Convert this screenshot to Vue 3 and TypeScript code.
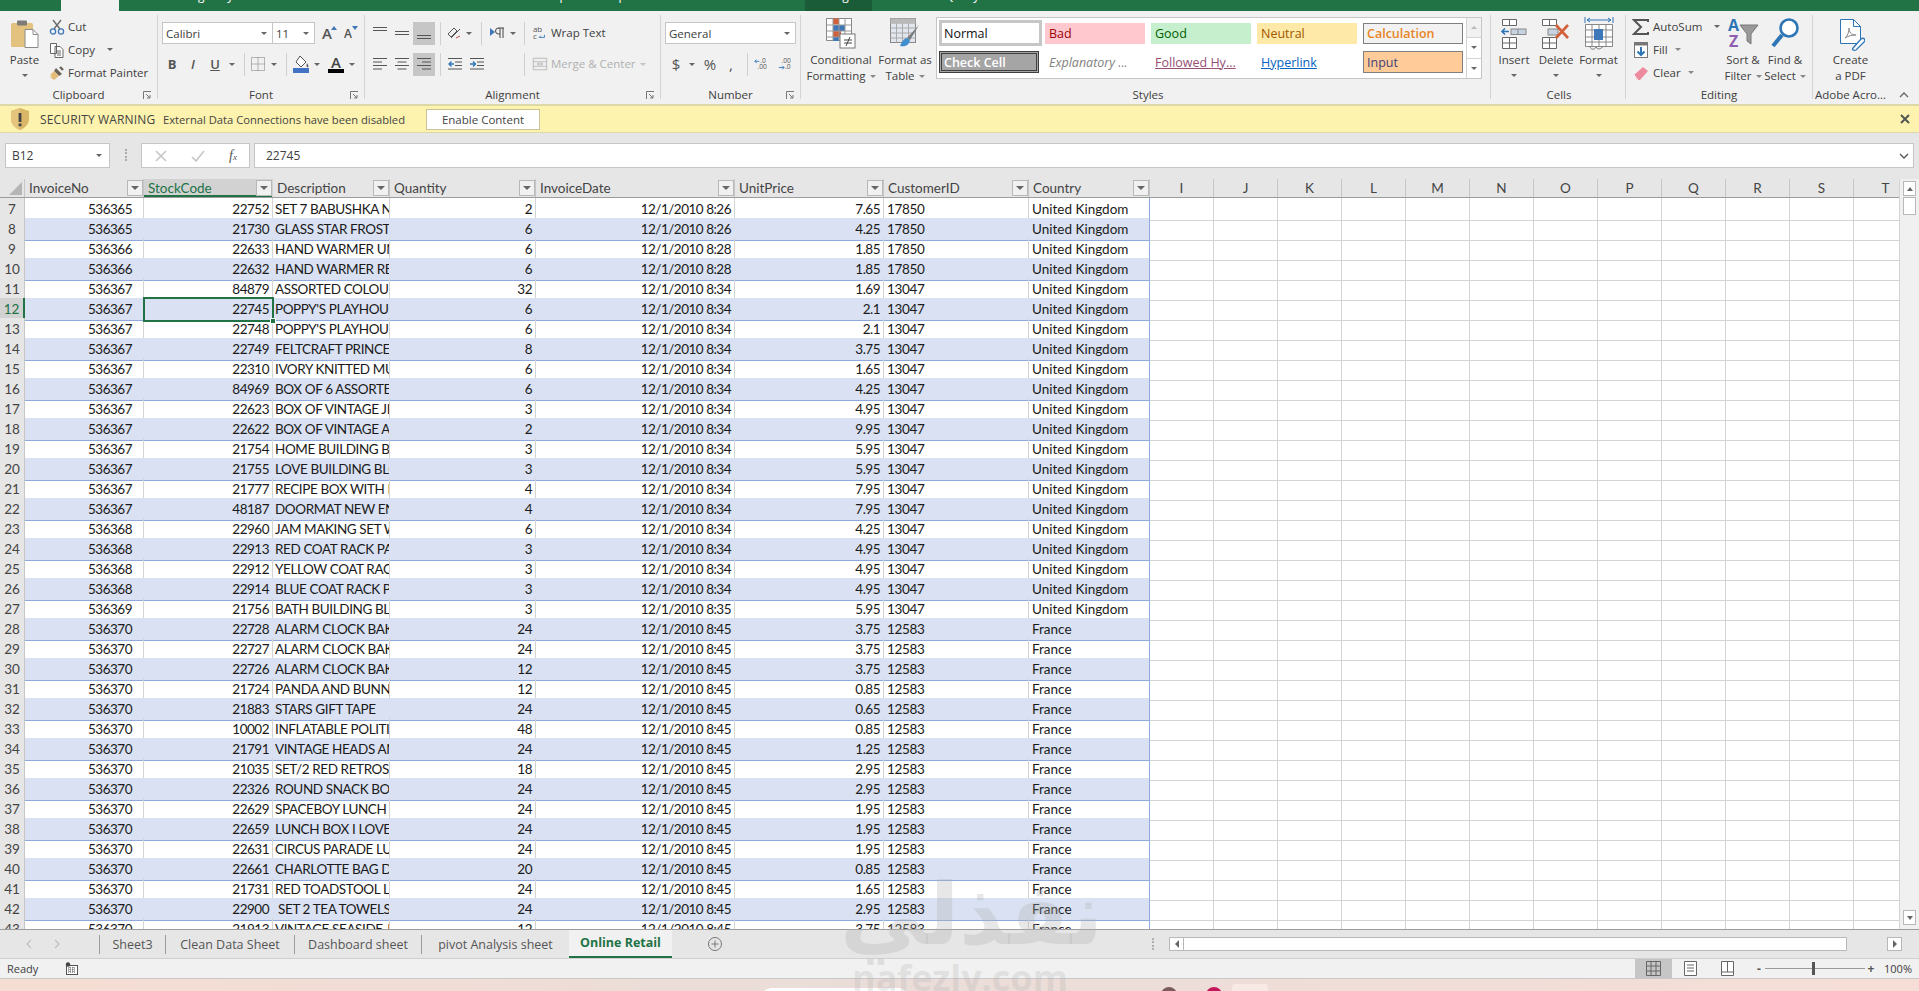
<template>
  <div class="excel">
    <!-- title strip, cut off by the capture -->
    <div class="titlebar">
      <div class="home-tab"></div>
      <div v-for="t in topTabs" :key="t.label" class="top-tab" :class="{ on: t.on }" :style="{ width: t.w + 'px', paddingLeft: t.pad + 'px' }"><span>{{ t.label }}</span></div>
    </div>

    <div class="ribbon">
      <!-- Clipboard -->
      <section class="group g-clip">
        <div class="body row">
          <div class="paste">
            <svg width="30" height="30" viewBox="0 0 30 30">
              <rect x="1" y="4" width="22" height="24" rx="1.5" fill="#e3c27f" />
              <rect x="7" y="1.5" width="10" height="5" rx="1" fill="#7d7a78" />
              <path d="M15 10.5h8l5 5v13H15z" fill="#fff" stroke="#8a8a8a" />
              <path d="M23 10.5v5h5" fill="none" stroke="#8a8a8a" />
            </svg>
            <span class="txt">Paste</span>
            <i class="caret"></i>
          </div>
          <div class="stack">
            <div class="small">
              <svg class="s-ico" viewBox="0 0 16 16"><path d="M4 1l7 9M12 1L5 10" stroke="#6b6b6b" stroke-width="1.4" fill="none" /><circle cx="4" cy="12.5" r="2.6" fill="none" stroke="#3f78b8" stroke-width="1.3" /><circle cx="12" cy="12.5" r="2.6" fill="none" stroke="#3f78b8" stroke-width="1.3" /></svg>
              <span>Cut</span>
            </div>
            <div class="small">
              <svg class="s-ico" viewBox="0 0 16 16"><path d="M1.5 1.5h6v10h-6zM6 4.5h5l3 3v8H6z" fill="#fff" stroke="#666" /><path d="M8 9h4M8 11h4M8 13h4" stroke="#666" /></svg>
              <span>Copy</span>
              <i class="caret copy-caret"></i>
            </div>
            <div class="small">
              <svg class="s-ico" viewBox="0 0 16 16"><path d="M7 3l6 6-3 2-5-5z" fill="#6a6258" /><path d="M5 6l5 5-5 4-4-3 2-1-2-1z" fill="#e2bc79" /><path d="M11 2l3 3" stroke="#6a6258" stroke-width="2.4" /></svg>
              <span>Format Painter</span>
            </div>
          </div>
        </div>
        <div class="label">Clipboard</div>
        <svg class="launch" viewBox="0 0 9 9"><path d="M.5 8V.5H8M3 3l4 4M7 4v3H4" fill="none" stroke="#777" /></svg>
      </section>

      <!-- Font -->
      <section class="group g-font">
        <div class="body">
          <div class="tools">
            <div class="select w-font"><span>Calibri</span><i class="caret"></i></div>
            <div class="select w-size"><span>11</span><i class="caret"></i></div>
            <div class="tb w-a1">A<svg class="mini-arrow" viewBox="0 0 6 4"><path d="M3 0l3 4H0z" fill="#3f78b8" /></svg></div>
            <div class="tb w-a2">A<svg class="mini-arrow" viewBox="0 0 6 4"><path d="M0 0h6L3 4z" fill="#3f78b8" /></svg></div>
          </div>
          <div class="tools second">
            <div class="tb w20 fb">B</div>
            <div class="tb w22 fi">I</div>
            <div class="tb w22 fu">U</div>
            <div class="tb w12"><i class="caret"></i></div>
            <i class="sep ml6"></i>
            <div class="tb w-bd"><svg class="ico" viewBox="0 0 16 16"><path d="M1.5 1.5h13v13h-13zM8 1.5v13M1.5 8h13" fill="none" stroke="#777" stroke-dasharray="1 1" /></svg></div>
            <div class="tb w12"><i class="caret"></i></div>
            <i class="sep ml6"></i>
            <div class="tb w-fill">
              <svg width="18" height="18" viewBox="0 0 18 18"><path d="M8 1l6 6-5 5-5-5z" fill="#fff" stroke="#555" /><path d="M15 8c1 2 2 3 1 4s-2 0-1-4z" fill="#555" /><rect x="1" y="13" width="16" height="5" fill="#4472c4" /></svg>
            </div>
            <div class="tb w12"><i class="caret"></i></div>
            <div class="tb w-color"><span class="color-a">A</span></div>
            <div class="tb w12"><i class="caret"></i></div>
          </div>
        </div>
        <div class="label">Font</div>
        <svg class="launch" viewBox="0 0 9 9"><path d="M.5 8V.5H8M3 3l4 4M7 4v3H4" fill="none" stroke="#777" /></svg>
      </section>

      <!-- Alignment -->
      <section class="group g-align">
        <div class="body">
          <div class="tools">
            <div class="tb w22"><svg class="ico" viewBox="0 0 16 16"><path d="M1 2.5h14M1 5.5h14" stroke="#555" /></svg></div>
            <div class="tb w22"><svg class="ico" viewBox="0 0 16 16"><path d="M1 6.5h14M1 9.5h14" stroke="#555" /></svg></div>
            <div class="tb w22 hit"><svg class="ico" viewBox="0 0 16 16"><path d="M1 10.5h14M1 13.5h14" stroke="#555" /></svg></div>
            <i class="sep ml5"></i>
            <div class="tb w-or"><svg class="ico" viewBox="0 0 16 16"><path d="M2 9l6-6 3 3-6 6zM5 13l9-9" fill="none" stroke="#555" /><path d="M10 13l4-2" stroke="#c0504d" /></svg></div>
            <div class="tb w10"><i class="caret"></i></div>
            <i class="sep ml7"></i>
            <div class="tb w-rtl"><svg class="ico" viewBox="0 0 16 16"><path d="M1 3l5 4-5 4z" fill="#3f78b8" /><path d="M9 3h6M11 3v10M14 3v10M9.500 3a3 3 0 0 0 0 6h1.500" fill="none" stroke="#444" /></svg></div>
            <div class="tb w10 ml2"><i class="caret"></i></div>
            <i class="sep ml6"></i>
            <div class="tb w-wrap"><svg class="ico" viewBox="0 0 18 18"><text x="1" y="8" font-size="9" fill="#555" font-family="Open Sans, sans-serif">ab</text><text x="1" y="16" font-size="9" fill="#555" font-family="Open Sans, sans-serif">c</text><path d="M8 14h6v-3M8 14l2-2" fill="none" stroke="#3f78b8" /></svg></div>
            <span class="txt tool-label">Wrap Text</span>
          </div>
          <div class="tools second">
            <div class="tb w22"><svg class="ico" viewBox="0 0 16 16"><path d="M1 2.500h14M1 6h9M1 9.500h14M1 13h9" stroke="#555" /></svg></div>
            <div class="tb w22"><svg class="ico" viewBox="0 0 16 16"><path d="M1 2.500h14M3.500 6h9M1 9.500h14M3.500 13h9" stroke="#555" /></svg></div>
            <div class="tb w22 hit"><svg class="ico" viewBox="0 0 16 16"><path d="M1 2.500h14M6 6h9M1 9.500h14M6 13h9" stroke="#555" /></svg></div>
            <i class="sep ml5"></i>
            <div class="tb w22 ml3"><svg class="ico" viewBox="0 0 16 16"><path d="M1 2.500h14M8 6h7M8 9.500h7M1 13h14" stroke="#555" /><path d="M7 8H2M4.500 5.500L2 8l2.500 2.500" fill="none" stroke="#2e75b6" stroke-width="1.300" /></svg></div>
            <div class="tb w22"><svg class="ico" viewBox="0 0 16 16"><path d="M1 2.500h14M8 6h7M8 9.500h7M1 13h14" stroke="#555" /><path d="M1 8h5M4 5.500L6.500 8 4 10.500" fill="none" stroke="#2e75b6" stroke-width="1.300" /></svg></div>
            <i class="sep ml-merge"></i>
            <div class="tb w-wrap"><svg class="ico" viewBox="0 0 18 18"><path d="M1.500 2.500h15v13h-15zM1.500 6.500h15M1.500 11.500h15M6 9h6M6 9l2-1.500M6 9l2 1.500M12 9l-2-1.500M12 9l-2 1.500" fill="none" stroke="#b4b4b4" /></svg></div>
            <span class="txt tool-label off">Merge &amp; Center</span>
            <i class="caret off-caret"></i>
          </div>
        </div>
        <div class="label">Alignment</div>
        <svg class="launch" viewBox="0 0 9 9"><path d="M.5 8V.5H8M3 3l4 4M7 4v3H4" fill="none" stroke="#777" /></svg>
      </section>

      <!-- Number -->
      <section class="group g-num">
        <div class="body">
          <div class="tools">
            <div class="select w-general"><span>General</span><i class="caret"></i></div>
          </div>
          <div class="tools second">
            <div class="tb w22 big-sym">$</div>
            <div class="tb w10"><i class="caret"></i></div>
            <div class="tb w24 ml1 big-sym">%</div>
            <div class="tb w18 big-sym">,</div>
            <i class="sep ml7"></i>
            <div class="tb w22 ml3"><svg class="ico" viewBox="0 0 18 16"><text x="7" y="7" font-size="7.500" fill="#555" font-family="Open Sans, sans-serif">.0</text><text x="4" y="14" font-size="7.500" fill="#555" font-family="Open Sans, sans-serif">.00</text><path d="M6 5H1M3 3L1 5l2 2" fill="none" stroke="#2e75b6" /></svg></div>
            <div class="tb w22 ml1"><svg class="ico" viewBox="0 0 18 16"><text x="5" y="7" font-size="7.500" fill="#555" font-family="Open Sans, sans-serif">.00</text><text x="9" y="14" font-size="7.500" fill="#555" font-family="Open Sans, sans-serif">.0</text><path d="M2 12h6M6 10l2 2-2 2" fill="none" stroke="#2e75b6" /></svg></div>
          </div>
        </div>
        <div class="label">Number</div>
        <svg class="launch" viewBox="0 0 9 9"><path d="M.5 8V.5H8M3 3l4 4M7 4v3H4" fill="none" stroke="#777" /></svg>
      </section>

      <!-- Styles -->
      <section class="group g-styles">
        <div class="body row">
          <div class="big w-cond">
            <div class="big-ico">
              <svg width="30" height="33" viewBox="0 0 30 33">
                <path d="M.5 1.500h25v22h-25z" fill="#fff" stroke="#888" />
                <rect x="7" y="1.500" width="6" height="6" fill="#d2603a" />
                <rect x="7" y="8" width="12" height="6" fill="#3f78b8" />
                <rect x="7" y="14" width="8" height="6" fill="#d2603a" />
                <rect x="7" y="20" width="6" height="4" fill="#3f78b8" />
                <path d="M7 1.500v22M13 1.500v22M19 1.500v22M.5 8h25M.5 14h25M.5 20h25" stroke="#999" fill="none" />
                <rect x="14" y="17" width="15" height="14" fill="#fff" stroke="#777" />
                <path d="M18 23h8M18 26h8M24 20l-4 9" stroke="#444" />
              </svg>
            </div>
            <span class="txt">Conditional</span>
            <span class="txt">Formatting<i class="caret inl"></i></span>
          </div>
          <div class="big w-fmt">
            <div class="big-ico">
              <svg width="30" height="33" viewBox="0 0 30 33">
                <rect x=".5" y="1.500" width="25" height="24" fill="#e2e6ee" stroke="#888" />
                <path d="M.5 6h25M.5 11h25M.5 16h25M.5 21h25M6.500 1.500v24M12.500 1.500v24M18.500 1.500v24" stroke="#aaa" />
                <rect x=".5" y="1.500" width="25" height="5" fill="#b9b9b9" />
                <path d="M29 8L20 23l-3-2z" fill="#7a7a7a" />
                <path d="M17 21c-4 1-5 4-7 8 4 1 9 0 10-6z" fill="#3f8fd0" />
              </svg>
            </div>
            <span class="txt">Format as</span>
            <span class="txt">Table<i class="caret inl"></i></span>
          </div>
          <div class="gallery">
            <div class="cells">
              <div class="cs normal">Normal</div>
              <div class="cs bad">Bad</div>
              <div class="cs good">Good</div>
              <div class="cs neutral">Neutral</div>
              <div class="cs calc">Calculation</div>
              <div class="cs check">Check Cell</div>
              <div class="cs expl">Explanatory ...</div>
              <div class="cs foll"><u>Followed Hy...</u></div>
              <div class="cs hyper"><u>Hyperlink</u></div>
              <div class="cs input">Input</div>
            </div>
            <div class="gal-scroll">
              <div><i class="caret up dim"></i></div>
              <div><i class="caret"></i></div>
              <div class="more"><i class="caret"></i></div>
            </div>
          </div>
        </div>
        <div class="label">Styles</div>
      </section>

      <!-- Cells -->
      <section class="group g-cells">
        <div class="body row">
          <div class="big w42">
            <div class="big-ico">
              <svg width="28" height="34" viewBox="0 0 28 34">
                <path d="M2.500 2.500h14v6h-14zM9.500 2.500v6M2.500 20.500h14v11h-14zM2.500 26h14M9.500 20.500v11" fill="#fff" stroke="#666" />
                <rect x="11" y="12" width="15" height="5.500" fill="#c7d3e0" stroke="#888" />
                <path d="M18 12v5.500" stroke="#888" />
                <path d="M9 14.500H2M5 11.500l-3 3 3 3" fill="none" stroke="#2e75b6" stroke-width="1.600" />
              </svg>
            </div>
            <span class="txt">Insert</span>
            <i class="caret below"></i>
          </div>
          <div class="big w42">
            <div class="big-ico">
              <svg width="32" height="34" viewBox="0 0 32 34">
                <path d="M2.500 2.500h14v6h-14zM9.500 2.500v6M2.500 20.500h14v11h-14zM2.500 26h14M9.500 20.500v11" fill="#fff" stroke="#666" />
                <rect x="8" y="12" width="10" height="6" fill="#c7d3e0" stroke="#888" />
                <path d="M16 8l12 13M28 8L16 21" stroke="#d2603a" stroke-width="2.600" />
              </svg>
            </div>
            <span class="txt">Delete</span>
            <i class="caret below"></i>
          </div>
          <div class="big w43">
            <div class="big-ico">
              <svg width="30" height="36" viewBox="0 0 30 36">
                <path d="M1 1v6M29 1v6M3 4h24M3 4l3-2M3 4l3 2M27 4l-3-2M27 4l-3 2" stroke="#2e75b6" fill="none" />
                <path d="M1.500 8.500h27v22h-27zM8 8.500v22M15 8.500v22M22 8.500v22M1.500 14h27M1.500 21h27M1.500 26h27" fill="#fff" stroke="#888" />
                <rect x="10" y="13" width="9" height="11" fill="#3f78b8" />
                <path d="M6 30c0 4 5 4 6 1 1 3 6 2 7-1" fill="none" stroke="#777" />
              </svg>
            </div>
            <span class="txt">Format</span>
            <i class="caret below"></i>
          </div>
        </div>
        <div class="label">Cells</div>
      </section>

      <!-- Editing -->
      <section class="group g-edit">
        <div class="body row">
          <div class="stack edit-stack">
            <div class="small">
              <svg class="e-ico" viewBox="0 0 18 18"><path d="M16 4V2H2l7 7-7 7h14v-2" fill="none" stroke="#555" stroke-width="2" /></svg>
              <span>AutoSum</span>
              <i class="caret sum-caret"></i>
            </div>
            <div class="small">
              <svg class="e-ico" viewBox="0 0 18 18"><rect x="2.500" y="1.500" width="13" height="15" fill="#fff" stroke="#777" /><rect x="2.500" y="1.500" width="13" height="3" fill="#777" /><path d="M9 6v8M5.500 10.500L9 14l3.500-3.500" fill="none" stroke="#2e75b6" stroke-width="2" /></svg>
              <span>Fill</span><i class="caret inl"></i>
            </div>
            <div class="small">
              <svg class="e-ico" viewBox="0 0 18 18"><path d="M2 11l9-8 5 4-8 9H5z" fill="#ee8a9e" /><path d="M2 11l4 5" stroke="#fff" /></svg>
              <span>Clear</span><i class="caret inl"></i>
            </div>
          </div>
          <div class="big w42">
            <div class="big-ico">
              <svg width="32" height="36" viewBox="0 0 32 36">
                <text x="1" y="15" font-size="16" font-weight="700" fill="#2e75b6" font-family="Open Sans, sans-serif">A</text>
                <text x="2" y="31" font-size="16" font-weight="700" fill="#8e5eb0" font-family="Open Sans, sans-serif">Z</text>
                <path d="M13 9h18l-7 9v10l-4-3v-7z" fill="#9a9a9a" stroke="#777" />
              </svg>
            </div>
            <span class="txt">Sort &amp;</span>
            <span class="txt">Filter<i class="caret inl"></i></span>
          </div>
          <div class="big w42">
            <div class="big-ico">
              <svg width="30" height="36" viewBox="0 0 30 36">
                <circle cx="19" cy="12" r="8.500" fill="#fff" stroke="#2e75b6" stroke-width="2.600" />
                <path d="M12 19L3 30" stroke="#2e75b6" stroke-width="4" />
              </svg>
            </div>
            <span class="txt">Find &amp;</span>
            <span class="txt">Select<i class="caret inl"></i></span>
          </div>
        </div>
        <div class="label">Editing</div>
      </section>

      <!-- Adobe -->
      <section class="group g-adobe">
        <div class="body row">
          <div class="big w-pdf">
            <div class="big-ico">
              <svg width="28" height="34" viewBox="0 0 28 34">
                <path d="M3.500 2.500h13l7 7v17h-20z" fill="#fff" stroke="#2e75b6" />
                <path d="M16.500 2.500v7h7" fill="none" stroke="#2e75b6" />
                <path d="M8 21c3-2 4-7 4-10 0 4 2 7 7 7-4 0-8 1-11 3z" fill="none" stroke="#888" />
                <path d="M16 31l8-9c3-2 5 1 3 3l-8 8c-3 1-4-1-3-2z" fill="#fff" stroke="#2e75b6" stroke-width="1.300" />
              </svg>
            </div>
            <span class="txt">Create</span>
            <span class="txt">a PDF</span>
          </div>
        </div>
        <div class="label nowrap">Adobe Acro...</div>
      </section>

      <div class="collapse">
        <svg width="10" height="6" viewBox="0 0 10 6"><path d="M1 5l4-4 4 4" fill="none" stroke="#666" stroke-width="1.300" /></svg>
      </div>
    </div>

    <!-- security warning -->
    <div class="msgbar">
      <svg class="shield" width="20" height="24" viewBox="0 0 20 24">
        <path d="M10 1l9 3v8c0 5-4 9-9 11-5-2-9-6-9-11V4z" fill="#d9b668" />
        <path d="M10 1v22c-5-2-9-6-9-11V4z" fill="#e5c57e" />
        <rect x="8.600" y="6" width="2.800" height="9" fill="#444" />
        <rect x="8.600" y="16.500" width="2.800" height="2.800" fill="#444" />
      </svg>
      <span class="msg-title">SECURITY WARNING</span>
      <span class="msg-text">External Data Connections have been disabled</span>
      <button class="enable">Enable Content</button>
      <span class="msg-close">
        <svg width="10" height="10" viewBox="0 0 10 10"><path d="M1 1l8 8M9 1L1 9" stroke="#555" stroke-width="2" /></svg>
      </span>
    </div>

    <!-- formula bar -->
    <div class="formula">
      <div class="namebox"><span>B12</span><i class="caret"></i></div>
      <div class="grip"></div>
      <div class="fx-box">
        <svg width="12" height="12" viewBox="0 0 12 12"><path d="M1 1l10 10M11 1L1 11" stroke="#c6c6c6" stroke-width="1.600" /></svg>
        <svg width="14" height="12" viewBox="0 0 14 12"><path d="M1 7l4 4 8-10" fill="none" stroke="#c6c6c6" stroke-width="1.600" /></svg>
        <span class="fx">f<small>x</small></span>
      </div>
      <div class="fx-input"><span>22745</span><svg width="10" height="6" viewBox="0 0 10 6"><path d="M1 1l4 4 4-4" fill="none" stroke="#555" stroke-width="1.300" /></svg></div>
    </div>

    <!-- sheet -->
    <div class="sheet">
      <div class="grid">
        <div class="line head">
          <div class="corner"><svg width="13" height="13" viewBox="0 0 13 13"><path d="M13 0v13H0z" fill="#b5b5b5" /></svg></div>
          <div v-for="c in columns" :key="c" class="h-cell" :class="{ picked: c === 'StockCode' }">
            <span>{{ c }}</span>
            <b class="filter"><i class="caret"></i></b>
          </div>
          <div v-for="l in letters" :key="l" class="h-letter">{{ l }}</div>
        </div>
        <div v-for="r in rows" :key="r.n" class="line" :class="{ band: r.n % 2 === 0 }">
          <div class="rn" :class="{ picked: r.n === 12 }">{{ r.n }}</div>
          <div class="c num pad-a">{{ r.inv }}</div>
          <div class="c num" :class="{ active: r.n === 12 }">{{ r.code }}</div>
          <div class="c desc">{{ r.desc }}</div>
          <div class="c num">{{ r.qty }}</div>
          <div class="c num">{{ r.date }}</div>
          <div class="c num">{{ r.price }}</div>
          <div class="c cust">{{ r.cust }}</div>
          <div class="c last">{{ r.country }}</div>
          <div v-for="l in letters" :key="l" class="e"></div>
        </div>
      </div>
      <div class="vscroll">
        <div class="v-btn"><i class="caret up"></i></div>
        <div class="v-thumb"></div>
        <div class="v-track"></div>
        <div class="v-btn"><i class="caret"></i></div>
      </div>
    </div>

    <!-- sheet tabs -->
    <div class="tabbar">
      <div class="nav">
        <svg width="6" height="10" viewBox="0 0 6 10"><path d="M5 1L1 5l4 4" fill="none" stroke="#c0c0c0" stroke-width="1.300" /></svg>
        <svg width="6" height="10" viewBox="0 0 6 10"><path d="M1 1l4 4-4 4" fill="none" stroke="#c0c0c0" stroke-width="1.300" /></svg>
      </div>
      <div v-for="t in sheets" :key="t.name" class="sheet-tab" :class="{ on: t.on }" :style="{ width: t.w + 'px' }">{{ t.name }}</div>
      <div class="add-tab"><svg width="16" height="16" viewBox="0 0 16 16"><circle cx="8" cy="8" r="6.500" fill="none" stroke="#777" /><path d="M8 4.500v7M4.500 8h7" stroke="#777" /></svg></div>
      <div class="h-scroll-zone">
        <span class="dots"></span>
        <div class="h-btn"><i class="tri-l"></i></div>
        <div class="h-thumb"></div>
        <div class="h-track"></div>
        <div class="h-btn"><i class="tri-r"></i></div>
      </div>
    </div>

    <!-- status bar -->
    <div class="status">
      <span class="ready">Ready</span>
      <svg width="13" height="13" viewBox="0 0 13 13"><rect x="1.500" y="3.500" width="11" height="9" fill="#fff" stroke="#555" /><path d="M3 6h8M3 8h8M3 10h8M5 5v6M8 5v6" stroke="#555" stroke-dasharray="1 1" /><circle cx="3" cy="2.500" r="2.200" fill="#444" /></svg>
      <div class="status-right">
        <div class="view on"><svg width="15" height="15" viewBox="0 0 15 15"><path d="M.5.500h14v14H.500zM5 .500v14M10 .500v14M.5 5h14M.5 10h14" fill="none" stroke="#666" /></svg></div>
        <div class="view"><svg width="13" height="15" viewBox="0 0 13 15"><path d="M.5.500h12v14H.500z" fill="#fff" stroke="#666" /><path d="M3 4h7M3 7h7M3 10h7" stroke="#666" /></svg></div>
        <div class="view"><svg width="15" height="15" viewBox="0 0 15 15"><path d="M1.500.500h12v14h-12zM1.500 11h12M7.500.500V11" fill="#fff" stroke="#666" /></svg></div>
        <div class="zoom">
          <b class="z-sign">-</b>
          <div class="z-line"><i class="z-thumb"></i></div>
          <b class="z-sign">+</b>
        </div>
        <span class="pct">100%</span>
      </div>
    </div>

    <!-- desktop behind the window -->
    <div class="desktop">
      <div class="d-pill"></div>
      <i class="d-dot brown"></i>
      <i class="d-dot pink"></i>
      <div class="d-box"></div>
    </div>

    <!-- video watermark over everything -->
    <div class="watermark">
      <div class="wm-ar">نفذلي</div>
      <div class="wm-en">nafezly.com</div>
    </div>
  </div>
</template>

<script setup lang="ts">
interface Row {
  n: number
  inv: number
  code: number
  desc: string
  qty: number
  date: string
  price: string
  cust: number
  country: string
}

const topTabs = [
  { label: 'Insert', w: 50, pad: 14 },
  { label: 'Page Layout', w: 83, pad: 13 },
  { label: 'Formulas', w: 78, pad: 15 },
  { label: 'Data', w: 55, pad: 12 },
  { label: 'Review', w: 60, pad: 8 },
  { label: 'View', w: 66, pad: 10 },
  { label: 'Developer', w: 80, pad: 8 },
  { label: 'Help', w: 212, pad: 7 },
  { label: 'Design', w: 67, pad: 13, on: true },
  { label: 'Query', w: 110, pad: 73 }
]

const columns = ['InvoiceNo', 'StockCode', 'Description', 'Quantity', 'InvoiceDate', 'UnitPrice', 'CustomerID', 'Country']
const letters = ['I', 'J', 'K', 'L', 'M', 'N', 'O', 'P', 'Q', 'R', 'S', 'T']
const sheets = [
  { name: 'Sheet3', w: 66 },
  { name: 'Clean Data Sheet', w: 129 },
  { name: 'Dashboard sheet', w: 127 },
  { name: 'pivot Analysis sheet', w: 148 },
  { name: 'Online Retail', w: 103, on: true }
]

// n, invoice, code, description, qty, time, price, customer
const raw: [number, number, string, number, string, string, number][] = [
  [536365, 22752, 'SET 7 BABUSHKA NESTING BOXES', 2, '8:26', '7.65', 17850],
  [536365, 21730, 'GLASS STAR FROSTED T-LIGHT HOLDER', 6, '8:26', '4.25', 17850],
  [536366, 22633, 'HAND WARMER UNION JACK', 6, '8:28', '1.85', 17850],
  [536366, 22632, 'HAND WARMER RED POLKA DOT', 6, '8:28', '1.85', 17850],
  [536367, 84879, 'ASSORTED COLOUR BIRD ORNAMENT', 32, '8:34', '1.69', 13047],
  [536367, 22745, "POPPY'S PLAYHOUSE BEDROOM", 6, '8:34', '2.1', 13047],
  [536367, 22748, "POPPY'S PLAYHOUSE KITCHEN", 6, '8:34', '2.1', 13047],
  [536367, 22749, 'FELTCRAFT PRINCESS CHARLOTTE DOLL', 8, '8:34', '3.75', 13047],
  [536367, 22310, 'IVORY KNITTED MUG COSY', 6, '8:34', '1.65', 13047],
  [536367, 84969, 'BOX OF 6 ASSORTED COLOUR TEASPOONS', 6, '8:34', '4.25', 13047],
  [536367, 22623, 'BOX OF VINTAGE JIGSAW BLOCKS', 3, '8:34', '4.95', 13047],
  [536367, 22622, 'BOX OF VINTAGE ALPHABET BLOCKS', 2, '8:34', '9.95', 13047],
  [536367, 21754, 'HOME BUILDING BLOCK WORD', 3, '8:34', '5.95', 13047],
  [536367, 21755, 'LOVE BUILDING BLOCK WORD', 3, '8:34', '5.95', 13047],
  [536367, 21777, 'RECIPE BOX WITH METAL HEART', 4, '8:34', '7.95', 13047],
  [536367, 48187, 'DOORMAT NEW ENGLAND', 4, '8:34', '7.95', 13047],
  [536368, 22960, 'JAM MAKING SET WITH JARS', 6, '8:34', '4.25', 13047],
  [536368, 22913, 'RED COAT RACK PARIS FASHION', 3, '8:34', '4.95', 13047],
  [536368, 22912, 'YELLOW COAT RACK PARIS FASHION', 3, '8:34', '4.95', 13047],
  [536368, 22914, 'BLUE COAT RACK PARIS FASHION', 3, '8:34', '4.95', 13047],
  [536369, 21756, 'BATH BUILDING BLOCK WORD', 3, '8:35', '5.95', 13047],
  [536370, 22728, 'ALARM CLOCK BAKELIKE PINK', 24, '8:45', '3.75', 12583],
  [536370, 22727, 'ALARM CLOCK BAKELIKE RED', 24, '8:45', '3.75', 12583],
  [536370, 22726, 'ALARM CLOCK BAKELIKE GREEN', 12, '8:45', '3.75', 12583],
  [536370, 21724, 'PANDA AND BUNNIES STICKER SHEET', 12, '8:45', '0.85', 12583],
  [536370, 21883, 'STARS GIFT TAPE', 24, '8:45', '0.65', 12583],
  [536370, 10002, 'INFLATABLE POLITICAL GLOBE', 48, '8:45', '0.85', 12583],
  [536370, 21791, 'VINTAGE HEADS AND TAILS CARD GAME', 24, '8:45', '1.25', 12583],
  [536370, 21035, 'SET/2 RED RETROSPOT TEA TOWELS', 18, '8:45', '2.95', 12583],
  [536370, 22326, 'ROUND SNACK BOXES SET OF4 WOODLAND', 24, '8:45', '2.95', 12583],
  [536370, 22629, 'SPACEBOY LUNCH BOX', 24, '8:45', '1.95', 12583],
  [536370, 22659, 'LUNCH BOX I LOVE LONDON', 24, '8:45', '1.95', 12583],
  [536370, 22631, 'CIRCUS PARADE LUNCH BOX', 24, '8:45', '1.95', 12583],
  [536370, 22661, 'CHARLOTTE BAG DOLLY GIRL DESIGN', 20, '8:45', '0.85', 12583],
  [536370, 21731, 'RED TOADSTOOL LED NIGHT LIGHT', 24, '8:45', '1.65', 12583],
  [536370, 22900, ' SET 2 TEA TOWELS I LOVE LONDON', 24, '8:45', '2.95', 12583],
  [536370, 21913, 'VINTAGE SEASIDE JIGSAW PUZZLES', 12, '8:45', '3.75', 12583]
]

const rows: Row[] = raw.map((r, i) => ({
  n: i + 7,
  inv: r[0],
  code: r[1],
  desc: r[2],
  qty: r[3],
  date: '12/1/2010 ' + r[4],
  price: r[5],
  cust: r[6],
  country: r[0] === 536370 ? 'France' : 'United Kingdom'
}))
</script>

<style>
html,
body {
  margin: 0;
  overflow: hidden;
}
</style>

<style scoped>
.excel {
  position: relative;
  width: 1919px;
  height: 991px;
  overflow: hidden;
  display: flex;
  flex-direction: column;
  background: #f1f1f1;
  font-family: "Open Sans", "Noto Sans", sans-serif;
  font-size: 11.5px;
  color: #404040;
}

/* title */
.titlebar {
  flex: 0 0 11px;
  display: flex;
  background: #217346;
  overflow: hidden;
  color: #fff;
  font-size: 12px;
}
.home-tab {
  width: 58px;
  margin-left: 61px;
  margin-right: 2px;
  background: #f1f1f1;
}
.top-tab {
  flex: none;
  box-sizing: border-box;
  height: 11px;
  white-space: nowrap;
  overflow: hidden;
}
.top-tab span {
  display: block;
  line-height: 3px;
  margin-top: -6px;
}
.top-tab.on {
  background: #1a5c38;
}

/* ribbon */
.ribbon {
  flex: 0 0 93px;
  display: flex;
  box-sizing: border-box;
}
.group {
  position: relative;
  box-sizing: border-box;
  height: 84px;
  margin-top: 4px;
  border-right: 1px solid #d4d4d4;
  flex: none;
}
.g-clip { width: 158px; }
.g-font { width: 207px; padding-left: 4px; }
.g-align { width: 296px; padding-left: 4px; }
.g-num { width: 140px; padding-left: 4px; }
.g-styles { width: 690px; padding-left: 5px; }
.g-cells { width: 135px; padding-left: 2px; }
.g-edit { width: 187px; }
.g-adobe { width: 75px; border-right: none; }
.body {
  height: 72px;
  display: flow-root;
}
.body.row {
  display: flex;
}
.label {
  height: 12px;
  line-height: 16px;
  text-align: center;
  font-size: 11.5px;
}
.label.nowrap {
  white-space: nowrap;
}
.g-font .label,
.g-align .label,
.g-num .label {
  margin-left: -4px;
}
.launch {
  position: absolute;
  right: 5px;
  bottom: -1px;
  width: 9px;
  height: 9px;
}
.txt {
  display: block;
  line-height: 16px;
  white-space: nowrap;
}
.caret {
  display: inline-block;
  width: 0;
  height: 0;
  border-left: 3px solid transparent;
  border-right: 3px solid transparent;
  border-top: 3px solid #666;
}
.caret.up {
  border-top: none;
  border-bottom: 3px solid #666;
}
.caret.dim {
  border-bottom-color: #b8b8b8;
}
.caret.inl {
  margin-left: 4px;
  vertical-align: 2px;
  border-top-color: #888;
}
.caret.below {
  margin-top: 6px;
}
.paste {
  width: 49px;
  display: flex;
  flex-direction: column;
  align-items: center;
  padding-top: 4px;
  box-sizing: border-box;
}
.paste .txt {
  margin-top: 3px;
}
.paste .caret {
  margin-top: 6px;
}
.stack {
  display: flex;
  flex-direction: column;
}
.small {
  height: 23px;
  display: flex;
  align-items: center;
  white-space: nowrap;
  gap: 3px;
}
.s-ico {
  width: 16px;
  height: 16px;
}
.copy-caret {
  margin-left: 9px;
}
.edit-stack {
  width: 96px;
  padding-left: 6px;
  box-sizing: border-box;
}
.e-ico {
  width: 18px;
  height: 18px;
}
.sum-caret {
  margin-left: 9px;
}
.tools {
  display: flex;
  align-items: center;
  height: 22px;
  margin-top: 7px;
}
.tools.second {
  margin-top: 9px;
}
.select {
  box-sizing: border-box;
  height: 22px;
  background: #fff;
  border: 1px solid #c6c6c6;
  display: flex;
  align-items: center;
  justify-content: space-between;
  padding: 0 5px 0 3px;
}
.w-font { width: 111px; }
.w-size { width: 43px; margin-left: -1px; }
.w-general { width: 131px; }
.tb {
  position: relative;
  flex: none;
  height: 22px;
  display: flex;
  align-items: center;
  justify-content: center;
}
.hit {
  height: 23px;
  background: #c6c6c6;
}
.ico {
  width: 16px;
  height: 16px;
}
.w10 { width: 10px; }
.w12 { width: 12px; }
.w18 { width: 18px; }
.w20 { width: 20px; }
.w22 { width: 22px; }
.w24 { width: 24px; }
.w42 { width: 42px; }
.w43 { width: 43px; }
.w-a1 { width: 16px; margin-left: 4px; font-size: 15px; color: #555; font-weight: 600; }
.w-a2 { width: 16px; margin-left: 5px; font-size: 12px; color: #555; font-weight: 600; }
.mini-arrow {
  position: absolute;
  right: -2px;
  top: 4px;
  width: 6px;
  height: 4px;
}
.fb { font-weight: 700; font-size: 13px; color: #555; }
.fi { font-style: italic; font-size: 13px; font-weight: 600; color: #555; }
.fu { text-decoration: underline; font-size: 13px; font-weight: 600; color: #555; }
.sep {
  flex: none;
  width: 1px;
  height: 23px;
  background: #d0d0d0;
}
.ml1 { margin-left: 1px; }
.ml2 { margin-left: 2px; }
.ml3 { margin-left: 3px; }
.ml5 { margin-left: 5px; }
.ml6 { margin-left: 6px; }
.ml7 { margin-left: 7px; }
.ml-merge { margin-left: 36px; }
.w-bd { width: 20px; margin-left: 3px; }
.w-fill { width: 20px; margin-left: 4px; }
.w-color { width: 20px; margin-left: 3px; }
.color-a {
  font-size: 15px;
  font-weight: 600;
  line-height: 14px;
  color: #444;
  border-bottom: 4px solid #000;
  padding: 0 3px;
}
.w-or { width: 20px; margin-left: 3px; }
.w-rtl { width: 18px; margin-left: 6px; }
.w-wrap { width: 20px; margin-left: 5px; }
.tool-label {
  margin-left: 1px;
}
.tool-label.off {
  color: #b0b0b0;
}
.off-caret {
  margin-left: 4px;
  border-top-color: #c4c4c4;
}
.big-sym {
  font-size: 15px;
  color: #555;
}

/* big buttons */
.big {
  flex: none;
  display: flex;
  flex-direction: column;
  align-items: center;
}
.big-ico {
  height: 37px;
  display: flex;
  align-items: center;
  justify-content: center;
}
.w-cond { width: 70px; }
.w-fmt { width: 58px; }
.w-pdf { width: 75px; }

/* cell styles gallery */
.gallery {
  box-sizing: border-box;
  width: 546px;
  height: 62px;
  margin: 2px 0 0 2px;
  background: #fff;
  border: 1px solid #c6c6c6;
  display: flex;
  justify-content: space-between;
}
.cells {
  display: grid;
  grid-template-columns: repeat(5, 100px);
  grid-template-rows: 26px 22px;
  column-gap: 6px;
  row-gap: 5px;
  padding: 2px 0 0 2px;
  font-size: 12.5px;
}
.cs {
  box-sizing: border-box;
  display: flex;
  align-items: center;
  padding-left: 4px;
  white-space: nowrap;
}
.normal {
  border: 3px solid #c6c6c6;
  margin-right: -3px;
  color: #111;
  padding-left: 2px;
}
.bad { margin: 3px 0 2px; background: #ffc7ce; color: #9c0006; }
.good { margin: 3px 0 2px; background: #c6efce; color: #006100; }
.neutral { margin: 3px 0 2px; background: #ffe9a8; color: #9c5700; }
.calc { margin: 3px 0 2px; background: #f2f2f2; color: #e88424; font-weight: 600; border: 1px solid #7f7f7f; padding-left: 3px; }
.check { background: #a5a5a5; color: #fff; font-weight: 600; border: 3px double #3f3f3f; padding-left: 2px; }
.expl { color: #7f7f7f; font-style: italic; }
.foll { color: #954f72; }
.hyper { color: #0563c1; }
.input { background: #ffcc99; color: #3f3f76; border: 1px solid #7f7f7f; padding-left: 3px; }
.gal-scroll {
  width: 14px;
  display: flex;
  flex-direction: column;
  border-left: 1px solid #d4d4d4;
}
.gal-scroll > div {
  flex: 1;
  display: flex;
  align-items: center;
  justify-content: center;
  border-bottom: 1px solid #d4d4d4;
}
.gal-scroll > div:first-child {
  background: #f1f1f1;
}
.gal-scroll .more {
  border-bottom: none;
  border-top: none;
}
.collapse {
  flex: 1;
  height: 93px;
  display: flex;
  align-items: flex-end;
  justify-content: center;
  padding-bottom: 6px;
  box-sizing: border-box;
}

/* message bar */
.msgbar {
  flex: 0 0 29px;
  box-sizing: border-box;
  display: flex;
  align-items: center;
  padding-left: 10px;
  background: #fdf3ae;
  border-top: 2px solid #dcd8a8;
  border-bottom: 1px solid #dcd8a8;
  color: #444;
}
.msg-title {
  margin-left: 10px;
  font-size: 12px;
  letter-spacing: 0.15px;
  width: 115px;
  white-space: nowrap;
}
.msg-text {
  margin-left: 8px;
  width: 263px;
  font-size: 11.2px;
  white-space: nowrap;
}
.enable {
  box-sizing: border-box;
  width: 114px;
  height: 21px;
  padding: 0;
  background: #fff;
  border: 1px solid #c9c39a;
  font: inherit;
  color: #444;
}
.msg-close {
  margin-left: auto;
  margin-right: 9px;
  display: flex;
}

/* formula bar */
.formula {
  flex: 0 0 46px;
  box-sizing: border-box;
  display: flex;
  padding: 10px 5px 11px 5px;
  background: #e6e6e6;
  font-size: 12px;
}
.namebox {
  box-sizing: border-box;
  width: 105px;
  background: #fff;
  border: 1px solid #c6c6c6;
  display: flex;
  align-items: center;
  justify-content: space-between;
  padding: 0 7px 0 6px;
}
.grip {
  width: 2px;
  height: 12px;
  margin: 6px 14px 0 15px;
  border-left: 2px dotted #aaa;
  box-sizing: border-box;
}
.fx-box {
  box-sizing: border-box;
  width: 109px;
  background: #fff;
  border: 1px solid #c6c6c6;
  display: flex;
  align-items: center;
  justify-content: space-between;
  padding: 0 12px 0 13px;
}
.fx {
  font-family: "Liberation Serif", serif;
  font-style: italic;
  font-size: 14px;
  color: #555;
}
.fx small {
  font-size: 9px;
}
.fx-input {
  box-sizing: border-box;
  flex: 1;
  margin-left: 4px;
  background: #fff;
  border: 1px solid #c6c6c6;
  display: flex;
  align-items: center;
  justify-content: space-between;
  padding: 0 4px 0 11px;
}

/* sheet */
.sheet {
  flex: 0 0 750px;
  display: flex;
  background: #fff;
  overflow: hidden;
  font-family: Lato, "Open Sans", sans-serif;
  font-size: 13.5px;
  color: #1a1a1a;
}
.grid {
  width: 1899px;
  overflow: hidden;
}
.line {
  display: grid;
  grid-template-columns: 25px 119px 129px 117px 146px 199px 149px 145px 121px repeat(12, 64px);
  height: 20px;
  width: 1918px;
}
.line.head {
  height: 18px;
  background: #e6e6e6;
  border-bottom: 1px solid #9c9c9c;
  color: #444;
}
.corner {
  display: flex;
  align-items: flex-end;
  justify-content: flex-end;
  padding: 0 2px 2px 0;
  box-sizing: border-box;
  border-right: 1px solid #c6c6c6;
}
.h-cell {
  display: flex;
  align-items: center;
  justify-content: space-between;
  padding-left: 4px;
  box-sizing: border-box;
  border-right: 1px solid #c6c6c6;
  white-space: nowrap;
  overflow: hidden;
}
.h-cell.picked {
  background: #d2d2d2;
  color: #217346;
  box-shadow: inset 0 -2px 0 #217346;
  border-right-color: #d2d2d2;
}
.filter {
  flex: none;
  box-sizing: border-box;
  width: 16px;
  height: 16px;
  background: #f1f1f1;
  border: 1px solid #b8b8b8;
  display: flex;
  align-items: center;
  justify-content: center;
}
.filter .caret {
  border-left-width: 4px;
  border-right-width: 4px;
  border-top-width: 4px;
}
.h-letter {
  text-align: center;
  line-height: 18px;
  border-right: 1px solid #c6c6c6;
  box-sizing: border-box;
}
.rn {
  background: #e6e6e6;
  border-right: 1px solid #c6c6c6;
  border-bottom: 1px solid #c6c6c6;
  box-sizing: border-box;
  line-height: 22px;
  text-align: center;
  color: #444;
}
.rn.picked {
  background: #d2d2d2;
  color: #217346;
  border-right: 2px solid #217346;
}
.c {
  box-sizing: border-box;
  position: relative;
  padding: 0 3px;
  line-height: 22px;
  white-space: pre;
  overflow: hidden;
  border-right: 1px solid #d4d4d4;
  border-bottom: 1px solid #8ea9db;
}
.band .c {
  background: #d9e1f2;
  border-right-color: #d9e1f2;
}
.band .c.last,
.c.last {
  border-right: 1px solid #8ea9db;
}
.c.desc {
  padding-left: 2px;
  padding-right: 0;
  letter-spacing: -0.4px;
}
.num {
  text-align: right;
  letter-spacing: -0.5px;
}
.cust {
  letter-spacing: -0.3px;
}
.pad-a {
  padding-right: 11px;
}
.c.active {
  overflow: visible;
  outline: 2px solid #217346;
  outline-offset: -1px;
  z-index: 2;
}
.c.active::after {
  content: "";
  position: absolute;
  right: -4px;
  bottom: -4px;
  width: 6px;
  height: 6px;
  background: #217346;
  border: 1px solid #fff;
  box-sizing: border-box;
}
.e {
  box-sizing: border-box;
  border-right: 1px solid #d4d4d4;
  border-bottom: 1px solid #d4d4d4;
}
.vscroll {
  flex: 1;
  box-sizing: border-box;
  background: #f0f0f0;
  border-left: 1px solid #d4d4d4;
  padding: 2px 3px 4px;
  display: flex;
  flex-direction: column;
}
.v-btn {
  flex: 0 0 15px;
  box-sizing: border-box;
  background: #fff;
  border: 1px solid #b8b8b8;
  display: flex;
  align-items: center;
  justify-content: center;
}
.v-btn .caret {
  border-width: 4px 3px;
  border-bottom-width: 0;
}
.v-btn .caret.up {
  border-top-width: 0;
  border-bottom-width: 4px;
}
.v-thumb {
  flex: 0 0 18px;
  background: #fff;
  border: 1px solid #b8b8b8;
  box-sizing: border-box;
  margin-top: 1px;
}
.v-track {
  flex: 1;
}

/* tabs */
.tabbar {
  flex: 0 0 29px;
  box-sizing: border-box;
  display: flex;
  align-items: center;
  background: #e6e6e6;
  border-top: 1px solid #9c9c9c;
  font-size: 12.5px;
  color: #555;
}
.nav {
  width: 100px;
  flex: none;
  display: flex;
  gap: 22px;
  padding-left: 26px;
  box-sizing: border-box;
  border-right: 1px solid #9c9c9c;
  height: 19px;
  align-items: center;
}
.sheet-tab {
  flex: none;
  box-sizing: border-box;
  height: 19px;
  line-height: 19px;
  text-align: center;
  border-right: 1px solid #9c9c9c;
  white-space: nowrap;
}
.sheet-tab.on {
  height: 28px;
  line-height: 26px;
  margin-left: -1px;
  background: #f1f1f1;
  border-right: none;
  border-bottom: 2px solid #217346;
  color: #217346;
  font-weight: 700;
}
.add-tab {
  margin-left: 35px;
  display: flex;
}
.h-scroll-zone {
  margin-left: auto;
  margin-right: 17px;
  width: 750px;
  display: flex;
  align-items: center;
  height: 14px;
}
.dots {
  height: 12px;
  width: 2px;
  margin-right: 15px;
  border-left: 2px dotted #b0b0b0;
  box-sizing: border-box;
}
.h-btn {
  flex: 0 0 15px;
  height: 14px;
  box-sizing: border-box;
  background: #fff;
  border: 1px solid #b8b8b8;
  display: flex;
  align-items: center;
  justify-content: center;
}
.tri-l,
.tri-r {
  width: 0;
  height: 0;
  border-top: 4px solid transparent;
  border-bottom: 4px solid transparent;
}
.tri-l {
  border-right: 4px solid #666;
}
.tri-r {
  border-left: 4px solid #666;
}
.h-thumb {
  flex: 0 0 663px;
  height: 14px;
  box-sizing: border-box;
  background: #fff;
  border: 1px solid #b8b8b8;
  border-left: none;
}
.h-track {
  flex: 1;
}

/* status */
.status {
  flex: 0 0 21px;
  box-sizing: border-box;
  display: flex;
  align-items: center;
  gap: 24px;
  padding-left: 7px;
  background: #f1f1f1;
  border-top: 1px solid #d0d0d0;
  border-bottom: 1px solid #c8c8c8;
  font-size: 11px;
}
.ready {
  width: 34px;
}
.status-right {
  margin-left: auto;
  height: 100%;
  display: flex;
  align-items: center;
}
.view {
  width: 37px;
  height: 100%;
  display: flex;
  align-items: center;
  justify-content: center;
}
.view.on {
  background: #c6c6c6;
}
.zoom {
  display: flex;
  align-items: center;
  margin-left: 9px;
  gap: 2px;
}
.z-sign {
  color: #555;
  font-size: 12px;
  width: 8px;
  text-align: center;
}
.z-line {
  position: relative;
  width: 100px;
  height: 1px;
  background: #999;
}
.z-thumb {
  position: absolute;
  left: 47px;
  top: -6px;
  width: 3px;
  height: 13px;
  background: #555;
}
.pct {
  margin: 0 7px 0 9px;
  font-size: 11px;
}

/* desktop strip */
.desktop {
  flex: 1;
  display: flex;
  align-items: flex-start;
  background: linear-gradient(90deg, #f6ddd3, #eaddd9 45%, #f6ded6);
  overflow: hidden;
}
.d-pill {
  width: 150px;
  height: 30px;
  margin: 9px 0 0 760px;
  background: #fff;
  border-radius: 12px 12px 0 0;
}
.d-dot {
  width: 16px;
  height: 16px;
  border-radius: 50%;
  margin-top: 8px;
}
.brown {
  margin-left: 251px;
  background: #7d5c5c;
}
.pink {
  margin-left: 29px;
  background: #c2185b;
}
.d-box {
  width: 36px;
  height: 20px;
  margin: 5px 0 0 10px;
  background: #f9e9e4;
  border-radius: 3px;
}

/* watermark */
.watermark {
  position: absolute;
  left: 840px;
  top: 872px;
  width: 240px;
  text-align: center;
  color: rgba(176, 176, 176, 0.3);
  pointer-events: none;
}
.wm-ar {
  font-family: "DejaVu Sans", sans-serif;
  font-weight: 700;
  font-size: 86px;
  line-height: 84px;
  height: 84px;
}
.wm-en {
  font-family: "Open Sans", sans-serif;
  font-weight: 700;
  font-size: 36px;
  line-height: 44px;
  color: rgba(176, 176, 176, 0.26);
}
</style>
